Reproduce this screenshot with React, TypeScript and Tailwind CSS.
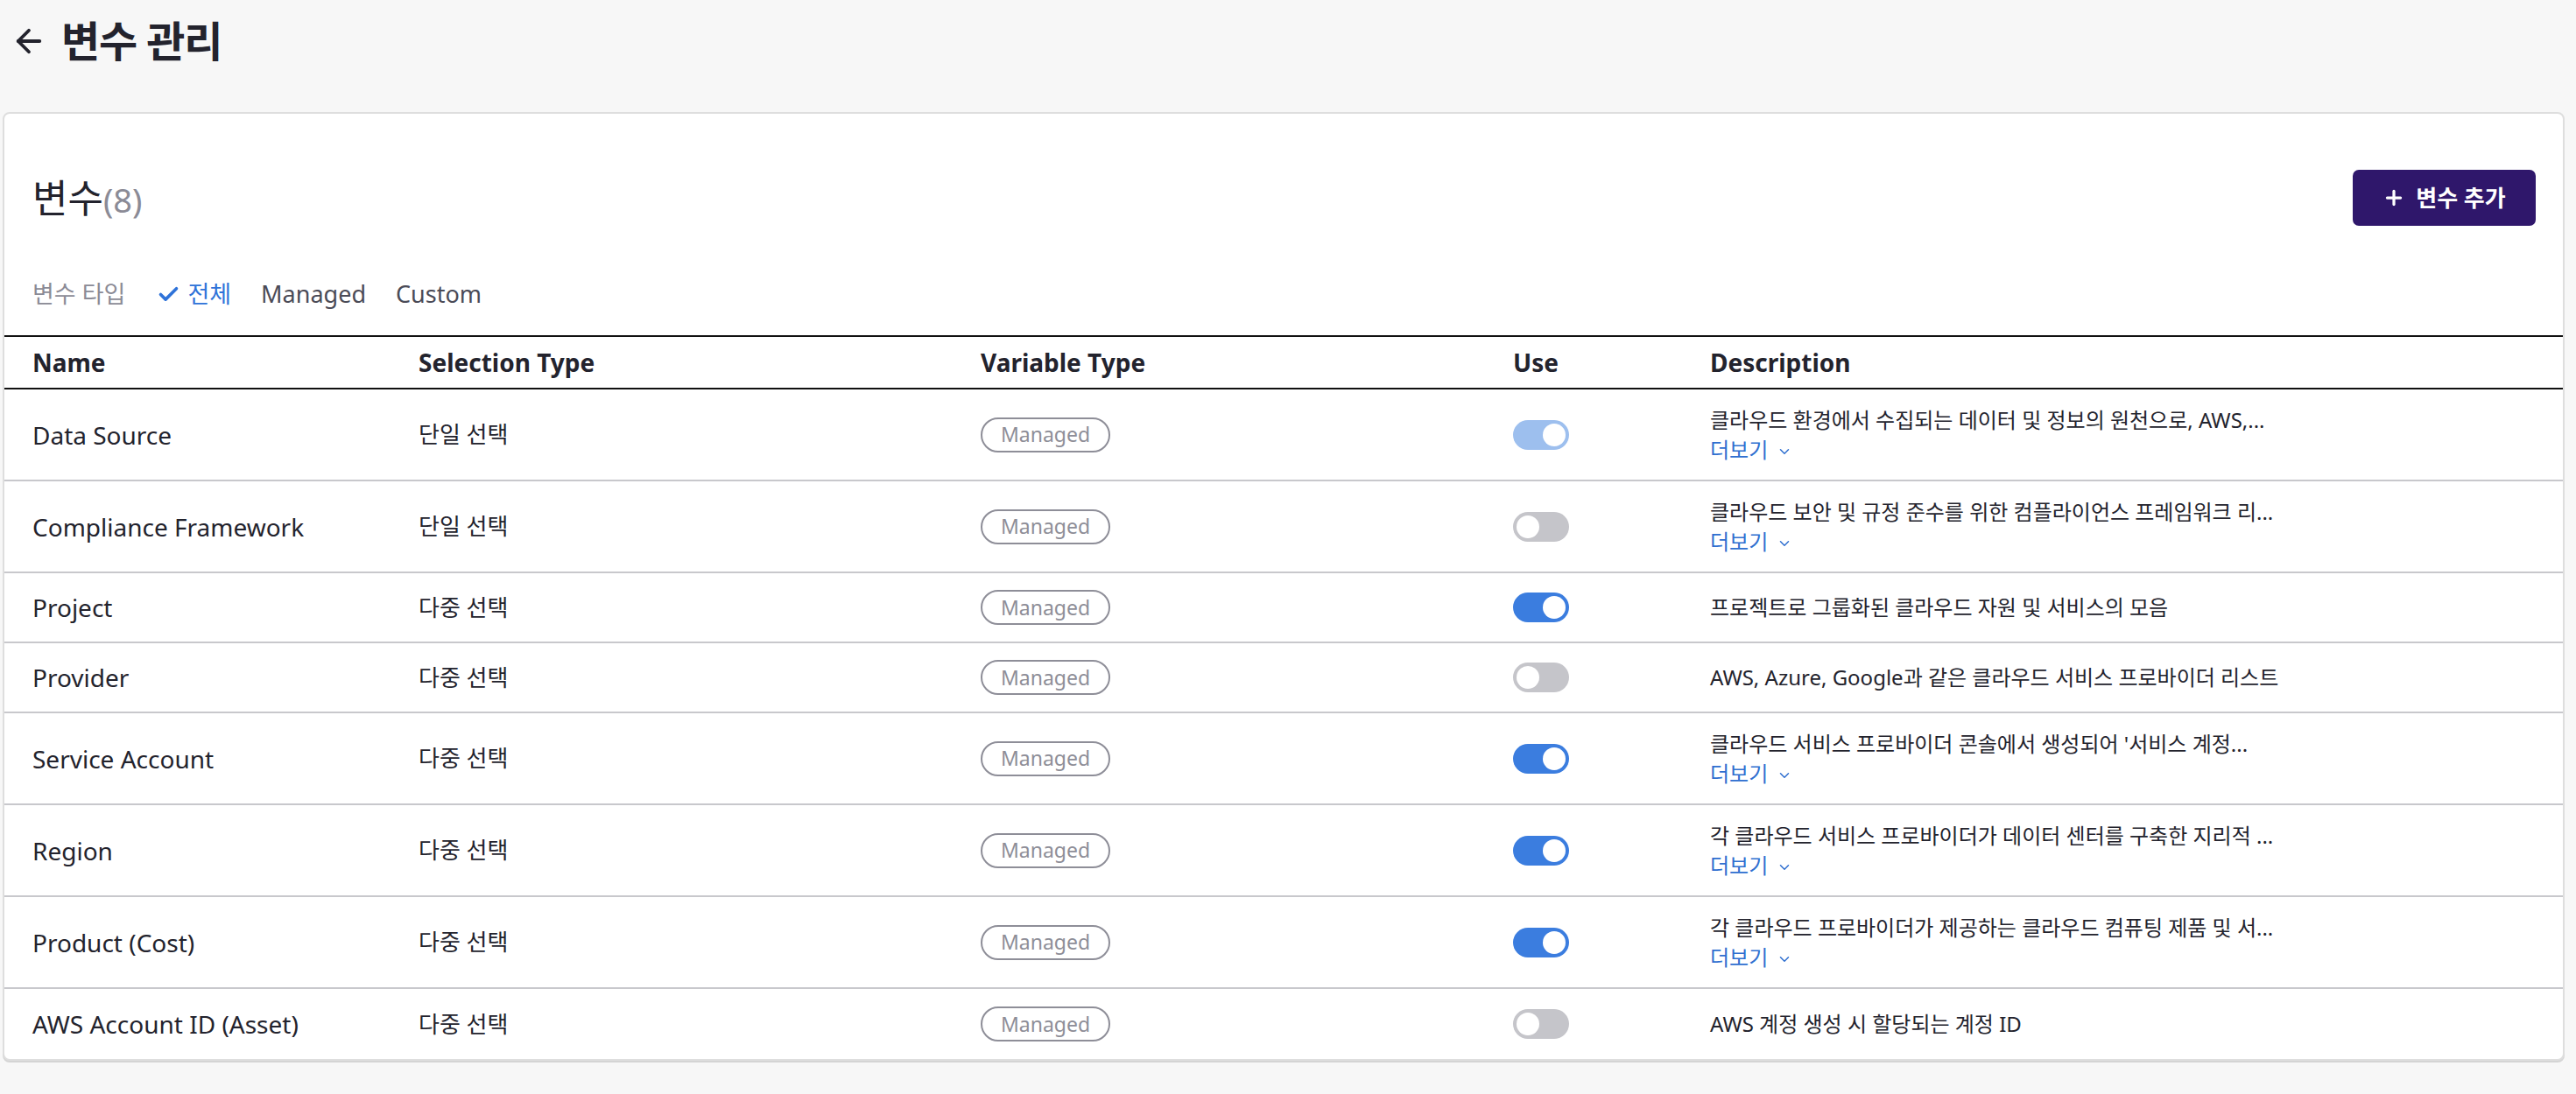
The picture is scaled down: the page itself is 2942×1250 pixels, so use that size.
import { ArrowLeft, Check, ChevronDown, Plus } from 'lucide-react'

type Row = {
  name: string
  selection: string
  use: 'on' | 'off' | 'locked'
  desc: string
  more?: boolean
}

const rows: Row[] = [
  { name: 'Data Source', selection: '단일 선택', use: 'locked', desc: '클라우드 환경에서 수집되는 데이터 및 정보의 원천으로, AWS,...', more: true },
  { name: 'Compliance Framework', selection: '단일 선택', use: 'off', desc: '클라우드 보안 및 규정 준수를 위한 컴플라이언스 프레임워크 리...', more: true },
  { name: 'Project', selection: '다중 선택', use: 'on', desc: '프로젝트로 그룹화된 클라우드 자원 및 서비스의 모음' },
  { name: 'Provider', selection: '다중 선택', use: 'off', desc: 'AWS, Azure, Google과 같은 클라우드 서비스 프로바이더 리스트' },
  { name: 'Service Account', selection: '다중 선택', use: 'on', desc: "클라우드 서비스 프로바이더 콘솔에서 생성되어 '서비스 계정...", more: true },
  { name: 'Region', selection: '다중 선택', use: 'on', desc: '각 클라우드 서비스 프로바이더가 데이터 센터를 구축한 지리적 ...', more: true },
  { name: 'Product (Cost)', selection: '다중 선택', use: 'on', desc: '각 클라우드 프로바이더가 제공하는 클라우드 컴퓨팅 제품 및 서...', more: true },
  { name: 'AWS Account ID (Asset)', selection: '다중 선택', use: 'off', desc: 'AWS 계정 생성 시 할당되는 계정 ID' },
]

const grid = 'grid grid-cols-[441px_642px_608px_225px_1fr] pl-[32px]'

function Toggle({ state }: { state: Row['use'] }) {
  const track =
    state === 'on' ? 'bg-[#3b7ddf] justify-end' : state === 'locked' ? 'bg-[#9dbfee] justify-end' : 'bg-[#c5c5ca] justify-start'
  return (
    <div className={`flex items-center w-[64px] h-[34px] rounded-full px-[4px] ${track}`}>
      <div className="w-[26px] h-[26px] rounded-full bg-white" />
    </div>
  )
}

export default function App() {
  return (
    <div
      className="min-h-[1250px] bg-[#f7f7f7] text-[#23232d]"
      style={{ fontFamily: '"Noto Sans", "Noto Sans CJK KR", sans-serif' }}
    >
      {/* Page title */}
      <div className="flex items-center h-[128px] pl-[12px] pb-[34px] gap-[16px]">
        <ArrowLeft size={42} strokeWidth={2.2} className="text-[#23232d]" />
        <h1 className="text-[48px] font-bold tracking-tight">변수 관리</h1>
      </div>

      {/* Card */}
      <div className="ml-[3px] mr-[13px] bg-white border-2 border-[#dedede] rounded-[8px] shadow-[0_2px_0_#d4d4d4] overflow-hidden">
        <div className="flex items-center justify-between h-[64px] mt-[64px] pl-[32px] pr-[31px]">
          <div className="flex items-baseline leading-none">
            <span className="text-[44px]">변수</span>
            <span className="text-[38px] text-[#8b8b96]">(8)</span>
          </div>
          <button className="flex items-center justify-center gap-[12px] w-[209px] h-[64px] rounded-[7px] bg-[#2f176b] text-white text-[26px] font-bold">
            <Plus size={26} strokeWidth={3} />
            변수 추가
          </button>
        </div>

        {/* Filter */}
        <div className="flex items-center mt-[60px] pl-[32px] h-[36px] text-[27px]">
          <span className="text-[#8b8b96]">변수 타입</span>
          <span className="flex items-center ml-[36px] text-[#2f73d9]">
            <Check size={27} strokeWidth={3.2} className="mr-[8px]" />
            전체
          </span>
          <span className="ml-[34px] text-[#4b4b57]">Managed</span>
          <span className="ml-[34px] text-[#4b4b57]">Custom</span>
        </div>

        {/* Table */}
        <div className="mt-[29px]">
          <div className={`${grid} items-center h-[62px] border-y-2 border-[#111] text-[28px] font-bold`}>
            <div>Name</div>
            <div>Selection Type</div>
            <div>Variable Type</div>
            <div>Use</div>
            <div>Description</div>
          </div>
          {rows.map((r, i) => (
            <div
              key={r.name}
              className={`${grid} items-center ${r.more ? 'h-[105px]' : 'h-[80px]'} ${
                i === rows.length - 1 ? '' : 'border-b-2 border-[#c8c8cc]'
              }`}
            >
              <div className="text-[28px]">{r.name}</div>
              <div className="text-[26px]">{r.selection}</div>
              <div>
                <span className="inline-flex items-center justify-center w-[148px] h-[40px] rounded-full border-2 border-[#8e8e98] text-[23px] text-[#8e8e98]">
                  Managed
                </span>
              </div>
              <div>
                <Toggle state={r.use} />
              </div>
              <div className="text-[24px] leading-[34px]">
                <div className="whitespace-nowrap">{r.desc}</div>
                {r.more && (
                  <div className="flex items-center text-[#2f6fd0]">
                    더보기
                    <ChevronDown size={18} strokeWidth={2} className="ml-[10px] mt-[4px]" />
                  </div>
                )}
              </div>
            </div>
          ))}
        </div>
      </div>
    </div>
  )
}
